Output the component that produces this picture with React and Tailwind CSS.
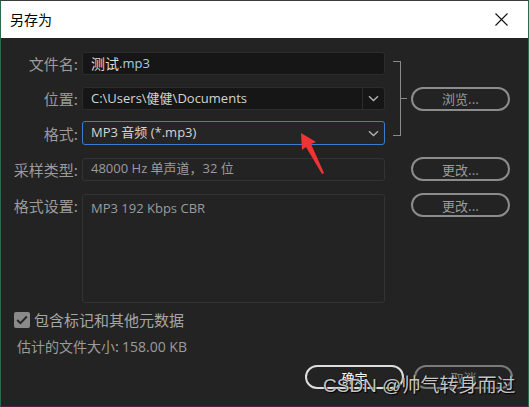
import React from 'react';

const cjk = { fontFamily: '"Noto Sans CJK SC", "Noto Sans", sans-serif' };

const Chevron = () => (
  <svg width="11" height="7" viewBox="0 0 11 7" className="text-[#b5b5b5]">
    <path d="M1 1.2 L5.5 5.5 L10 1.2" fill="none" stroke="currentColor" strokeWidth="1.3" />
  </svg>
);

const PillButton = ({ children, className = '' }) => (
  <div
    className={`w-[99px] h-[24px] rounded-full border-2 flex items-center justify-center text-[13px] leading-none ${className}`}
  >
    {children}
  </div>
);

const Label = ({ children, className = '' }) => (
  <div className={`w-[66px] shrink-0 text-right text-[15px] text-[#9b9b9b] leading-none ${className}`}>{children}</div>
);

export default function App() {
  return (
    <div
      className="relative w-[529px] h-[407px] overflow-hidden bg-[#232323] border-t border-t-[#3a3a3a] border-x border-x-[#2c6a50] border-b border-b-[#5a1f3c] select-none"
      style={cjk}
    >
      {/* title bar */}
      <div className="h-[37px] bg-white flex items-center justify-between pl-[9px] pr-[20px]">
        <span className="text-[14px] text-black">另存为</span>
        <svg width="13" height="13" viewBox="0 0 13 13">
          <path d="M0.5 0.5 L12.5 12.5 M12.5 0.5 L0.5 12.5" stroke="#111" strokeWidth="1.1" />
        </svg>
      </div>

      <div className="pl-[11px] pt-[14px]">
        {/* file rows + bracket + browse */}
        <div className="flex">
          <div className="flex flex-col">
            <div className="flex items-center h-[23px]">
              <Label>文件名:</Label>
              <div className="ml-[4px] w-[303px] h-[23px] rounded-[3px] bg-[#161616] border border-[#2c2c2c] flex items-center px-[8px] text-[14px]">
                <span className="text-[#dcdcdc]">测试</span>
                <span className="text-[#a9cbe6]" style={{ fontFamily: '"Open Sans", sans-serif', fontSize: '13px' }}>.mp3</span>
              </div>
            </div>
            <div className="flex items-center h-[23px] mt-[12px]">
              <Label>位置:</Label>
              <div className="ml-[4px] w-[303px] h-[23px] rounded-[3px] bg-[#161616] border border-[#2c2c2c] flex items-center">
                <div className="flex-1 px-[8px] text-[13px] text-[#d4d4d4]" style={{ fontFamily: '"Open Sans", "Noto Sans CJK SC", sans-serif' }}>
                  C:\Users\健健\Documents
                </div>
                <div className="w-[22px] h-full border-l border-[#2c2c2c] flex items-center justify-center">
                  <Chevron />
                </div>
              </div>
            </div>
            <div className="flex items-center h-[24px] mt-[11px]">
              <Label>格式:</Label>
              <div className="ml-[4px] w-[303px] h-[24px] rounded-[3px] bg-[#252525] border-[1.5px] border-[#3b7cd0] flex items-center">
                <div className="flex-1 px-[8px] text-[13px] text-[#d4d4d4]" style={{ fontFamily: '"Open Sans", "Noto Sans CJK SC", sans-serif' }}>
                  MP3 音频 (*.mp3)
                </div>
                <div className="w-[22px] flex items-center justify-center">
                  <Chevron />
                </div>
              </div>
            </div>
          </div>

          {/* bracket */}
          <div className="flex items-center ml-[8px]">
            <div className="w-[8px] h-[75px] border-y border-r border-[#8a8a8a]" />
            <div className="w-[6px] h-px bg-[#8a8a8a]" />
          </div>
          <div className="flex items-center ml-[4px]">
            <PillButton className="border-[#8c8c8c] text-[#9a9a9a]">浏览...</PillButton>
          </div>
        </div>

        {/* sample type */}
        <div className="flex items-center mt-[12px]">
          <Label>采样类型:</Label>
          <div className="ml-[4px] w-[303px] h-[23px] rounded-[3px] border border-[#333333] flex items-center px-[8px] text-[13px] text-[#9b9b9b]" style={{ fontFamily: '"Open Sans", "Noto Sans CJK SC", sans-serif' }}>
            48000 Hz 单声道，32 位
          </div>
          <PillButton className="ml-[26px] border-[#8c8c8c] text-[#9a9a9a]">更改...</PillButton>
        </div>

        {/* format settings */}
        <div className="flex items-start mt-[13px]">
          <Label className="pt-[4px]">格式设置:</Label>
          <div className="ml-[4px] w-[303px] h-[109px] rounded-[3px] border border-[#333333] px-[8px] pt-[4px] text-[13px] text-[#9b9b9b]" style={{ fontFamily: '"Open Sans", sans-serif' }}>
            MP3 192 Kbps CBR
          </div>
          <PillButton className="ml-[26px] -mt-px border-[#8c8c8c] text-[#9a9a9a]">更改...</PillButton>
        </div>

        {/* metadata checkbox */}
        <div className="flex items-center mt-[7px] ml-[2px]">
          <div className="w-[16px] h-[16px] rounded-[2px] bg-[#8a8a8a] flex items-center justify-center">
            <svg width="12" height="10" viewBox="0 0 12 10">
              <path d="M1.2 5 L4.5 8.2 L10.8 1.5" fill="none" stroke="#262626" strokeWidth="2" />
            </svg>
          </div>
          <span className="ml-[4px] text-[15px] text-[#a6a6a6] leading-[20px]">包含标记和其他元数据</span>
        </div>

        <div className="mt-[7px] ml-[5px] text-[14px] text-[#9b9b9b] leading-[18px]">
          估计的文件大小: <span style={{ fontFamily: '"Open Sans", sans-serif' }}>158.00 KB</span>
        </div>

        {/* bottom buttons */}
        <div className="flex justify-end mt-[9px] pr-[15px] gap-[10px]">
          <PillButton className="w-[97px] h-[23px] border-[#dcdcdc] text-white">确定</PillButton>
          <PillButton className="border-[#7a7a7a] text-[#7f7f7f]">取消</PillButton>
        </div>
      </div>

      {/* red annotation arrow */}
      <svg className="absolute left-[290px] top-[128px]" width="40" height="50" viewBox="0 0 40 50">
        <path d="M10 4 L25 13 L20 15 L33 44 L31 45 L15 18 L11 21 Z" fill="#f03434" />
      </svg>

      {/* watermark */}
      <div
        className="absolute left-[322px] top-[375px] whitespace-nowrap text-[19px] leading-none text-[#e9e9e9]/85"
        style={{ fontFamily: '"Liberation Sans", "Noto Sans CJK SC", sans-serif', textShadow: '0 0 1px #000, 1px 1px 1px #000' }}
      >
        CSDN @帅气转身而过
      </div>
    </div>
  );
}
